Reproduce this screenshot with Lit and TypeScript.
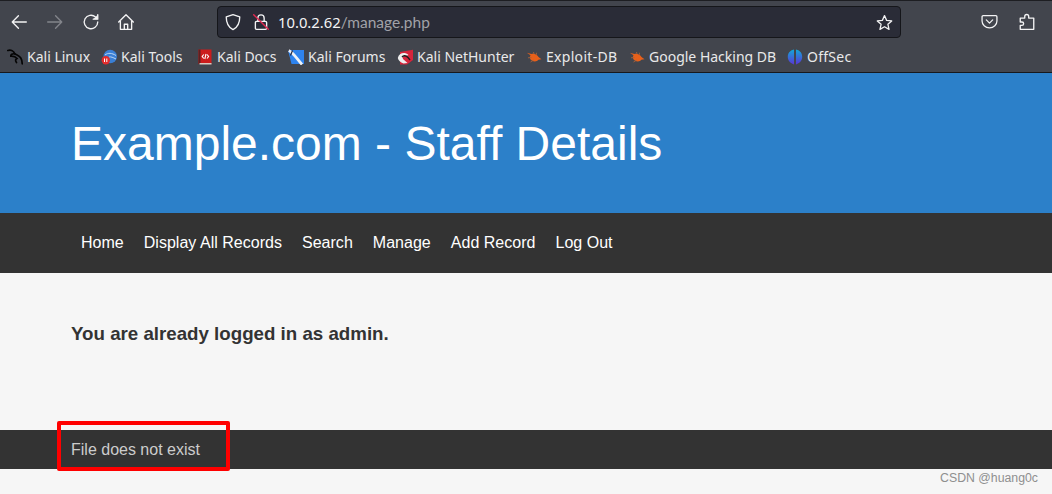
import { LitElement, html, css, svg } from "lit";
import { customElement } from "lit/decorators.js";

const ic = (w: number, body: unknown, cls = "") => html`<svg class="ic ${cls}" width=${w} height=${w} viewBox="0 0 16 16" fill="none" stroke="currentColor" stroke-width="1.2" stroke-linecap="round" stroke-linejoin="round">${body}</svg>`;

const bug = svg`<svg width="16" height="16" viewBox="0 0 16 16"><path d="M.800 3.800 L5.500 5 C8 4.200 11.500 5.800 12.500 8 L15.500 10.200 L12.300 10.800 C11 12.800 7.800 12.800 5.800 11.500 C3.800 10.200 3.200 8 4.500 6.200 Z" fill="#e8601a"/><path d="M2 8.800 L5.500 8.500 M4.500 13 L7.500 11.200 M7.500 3 L8 5 M10.500 3.800 L10.200 6" stroke="#a8623a" stroke-width=".9" fill="none"/></svg>`;

const marks = [
  { label: "Kali Linux", w: 62, ls: 0, icon: svg`<svg width="16" height="16" viewBox="0 0 16 16" fill="none" stroke="#050505" stroke-width="1.700" stroke-linecap="round"><path d="M.800 1.500 C4 .5 6.800 2.200 7.800 4.800 C9.500 6 12.200 6.500 13.800 9 C14.800 10.500 15 12 15.200 14.800"/><path d="M7.800 4.800 C5.200 4.500 3.500 5.500 3.800 7.200 C6.200 7 8.800 8 10 9.500 C8.500 10.200 8 11.500 9.500 13.500"/></svg>` },
  { label: "Kali Tools", w: 64, ls: 0, icon: svg`<svg width="16" height="16" viewBox="0 0 16 16"><circle cx="9.200" cy="7.500" r="6.800" fill="#3a7fd5"/><path d="M4 6 C7 3.500 11 4 15 6.500 M8 8 C10 7.500 12 8.500 15 10" stroke="#bcd6f2" stroke-width="1" fill="none"/><circle cx="4.800" cy="11.200" r="4.200" fill="#e22c2c"/><path d="M3.500 9.500V13M5.800 9.500V13" stroke="#fff" stroke-width="1"/></svg>` },
  { label: "Kali Docs", w: 59, ls: 0, icon: svg`<svg width="16" height="16" viewBox="0 0 16 16"><rect x="1.500" y="0.500" width="13" height="14.500" fill="#cc1c1c"/><rect x="1.500" y="0.500" width="2" height="14.500" fill="#5e2020"/><rect x="2.500" y="14" width="12" height="1.500" fill="#d9c9c0"/><path d="M6.800 5.500 L5.200 7.500 L6.800 9.500 M10 5.500 L11.600 7.500 L10 9.500 M9 5 L7.800 10" stroke="#fff" stroke-width="1.100" fill="none"/></svg>` },
  { label: "Kali Forums", w: 77, ls: 0, icon: svg`<svg width="16" height="16" viewBox="0 0 16 16"><path d="M3.500 1H16V15H3.500L.200 2Z" fill="#2e83ee"/><path d="M.800 1.500 C5 3.500 8 8.500 14 15.500" stroke="#eef1f6" stroke-width="2.800" fill="none"/><path d="M4.500 1.500 L2.500 6.500" stroke="#223" stroke-width="1.100"/></svg>` },
  { label: "Kali NetHunter", w: 97, ls: 0, icon: svg`<svg width="16" height="16" viewBox="0 0 16 16"><path d="M3 3 L16 .8 V11 L10 15.500 H3 Z" fill="#d6243b"/><path d="M.800 9 C2 4 7.500 2.500 11.500 6 L8.500 7.200 C6.500 6.500 5 8 6 10 L10.500 14 L6.500 14.500 C3.500 13.500 1.300 11.500 .800 9Z" fill="#eee"/><path d="M5 8 C6.500 6 9 6.500 11 8.500 L13 11" stroke="#1c1c1c" stroke-width="1.300" fill="none"/></svg>` },
  { label: "Exploit-DB", w: 71, ls: 0.3, icon: bug },
  { label: "Google Hacking DB", w: 126, ls: 0, icon: bug },
  { label: "OffSec", w: 44, ls: 0.25, icon: svg`<svg width="16" height="16" viewBox="0 0 16 16"><defs><linearGradient id="og" x1="0" y1="0" x2="0" y2="1"><stop offset="0" stop-color="#12a8d8"/><stop offset="1" stop-color="#5a35d6"/></linearGradient></defs><path d="M7 .500 C2.500 1.500 .800 4.500 .800 7.800 C.800 11 2.500 14 7 15.500Z M9 .500 C13.500 1.500 15.200 4.500 15.200 7.800 C15.200 11 13.500 14 9 15.500Z" fill="url(#og)"/></svg>` },
];

@customElement("app-root")
export class AppRoot extends LitElement {
  static styles = css`
    :host { display: block; position: relative; width: 1052px; height: 494px; overflow: hidden; background: #f6f6f6; font-family: "Liberation Sans", Arial, sans-serif; }
    .chrome { height: 73px; background: #42454d; display: flex; flex-direction: column; border-bottom: 1px solid #17181c; box-sizing: border-box; border-top: 1px solid #1d1e22; font-family: "Noto Sans", sans-serif; }
    .toolbar { height: 41px; display: flex; align-items: center; flex: none; color: #f3f3f4; }
    .ic { flex: none; display: block; }
    .nav-btns { display: flex; align-items: center; gap: 18px; padding-left: 10px; width: 217px; box-sizing: border-box; flex: none; }
    .nav-btns .ic:last-child { margin-left: -1px; }
    .dim { color: #83858b; }
    .url { width: 684px; height: 32px; flex: none; box-sizing: border-box; margin-top: 1px; background: #2a2c37; border: 1px solid #15161a; border-radius: 4px; display: flex; align-items: center; padding: 0 7px 0 6px; }
    .lockwrap { margin-left: 10px; }
    .addr { margin-left: 8px; font-size: 14.800px; color: #f4f4f5; flex: 1; white-space: nowrap; }
    .addr span { color: #a1a2a8; font-family: "Lato", sans-serif; font-size: 15.500px; }
    .right { display: flex; align-items: center; gap: 20px; margin-left: 80px; }
    .bookmarks { flex: 1; display: flex; align-items: center; padding: 0 0 1px 7px; gap: 12px; color: #e9e9ea; font-size: 14px; }
    .bm { display: flex; align-items: center; gap: 4px; white-space: nowrap; }
    .bm svg { display: block; flex: none; }
    .hero { height: 140px; background: #2c80c9; display: flex; align-items: center; padding: 2px 0 0 71px; box-sizing: border-box; }
    h1 { margin: 0; font-size: 48px; font-weight: 400; color: #fff; line-height: 1.100; }
    .menu { height: 60px; background: #333; display: flex; align-items: center; padding-left: 71px; }
    .menu a { color: #fff; font-size: 16px; padding: 0 10px; letter-spacing: .02px; }
    main { height: 157px; padding: 49px 0 0 71px; box-sizing: border-box; }
    .msg { margin: 0; font-size: 18.720px; font-weight: 700; color: #333; line-height: 24px; }
    footer { height: 39px; background: #333; display: flex; align-items: center; padding-left: 71px; color: #ccc; font-size: 16px; }
    .hl { position: absolute; left: 57px; top: 421px; width: 173px; height: 50px; box-sizing: border-box; border: 4px solid #f00; border-radius: 2px; }
    .wm { position: absolute; right: 14px; top: 470px; font-size: 12.300px; line-height: 16px; color: #8f8f8f; }
  `;

  render() {
    return html`
      <div class="chrome">
        <div class="toolbar">
          <div class="nav-btns">
            ${ic(18, svg`<path d="M14.500 8H2M7.500 2.500 2 8l5.500 5.500"/>`)}
            ${ic(18, svg`<path d="M1.500 8H14M8.500 2.500 14 8l-5.500 5.500"/>`, "dim")}
            ${ic(18, svg`<path d="M14 8a6 6 0 1 1-2-4.500"/><path d="M14 1.500V5.500H10" fill="currentColor"/>`)}
            ${ic(18, svg`<path d="M1.500 8 8 1.500 14.500 8M3 6.500V14.500H13V6.500M6.500 14.500V10H9.500V14.500"/>`)}
          </div>
          <div class="url">
            ${ic(18, svg`<path d="M8 1.500 14 3.500C14 9 12.500 12.500 8 14.800 3.500 12.500 2 9 2 3.500Z"/>`)}
            <span class="lockwrap">${ic(18, svg`<rect x="3" y="7.500" width="10" height="7" rx="1"/><path d="M5.200 7.500V4.500a2.800 2.800 0 0 1 5.600 0V7.500"/><path d="M1.500 1.500 14.500 14.500" stroke="#e22850" stroke-width="1.300"/>`)}</span>
            <div class="addr">10.0.2.62<span>/manage.php</span></div>
            ${ic(17, svg`<path d="M8 1.500 10 6 14.800 6.500 11.200 9.700 12.300 14.500 8 12 3.700 14.500 4.800 9.700 1.200 6.500 6 6Z"/>`)}
          </div>
          <div class="right">
            ${ic(17, svg`<path d="M2 2.500H14C14.500 2.500 15 3 15 3.500V7.500C15 11 12 14 8 14S1 11 1 7.500V3.500C1 3 1.500 2.500 2 2.500Z"/><path d="M5 6.500 8 9.500 11 6.500"/>`)}
            ${ic(18, svg`<path d="M2 14.500V11H3.500C5.500 11 5.500 8 3.500 8H2V4.500H6V3C6 .8 9.500 .8 9.500 3V4.500H14V14.500Z"/>`)}
          </div>
        </div>
        <div class="bookmarks">
          ${marks.map((m) => html`<div class="bm">${m.icon}<span style="width:${m.w}px;letter-spacing:${m.ls}px">${m.label}</span></div>`)}
        </div>
      </div>
      <header class="hero"><h1>Example.com - Staff Details</h1></header>
      <nav class="menu">
        ${["Home", "Display All Records", "Search", "Manage", "Add Record", "Log Out"].map((t) => html`<a>${t}</a>`)}
      </nav>
      <main><p class="msg">You are already logged in as admin.</p></main>
      <footer>File does not exist</footer>
      <div class="hl"></div>
      <div class="wm">CSDN @huang0c</div>
    `;
  }
}
